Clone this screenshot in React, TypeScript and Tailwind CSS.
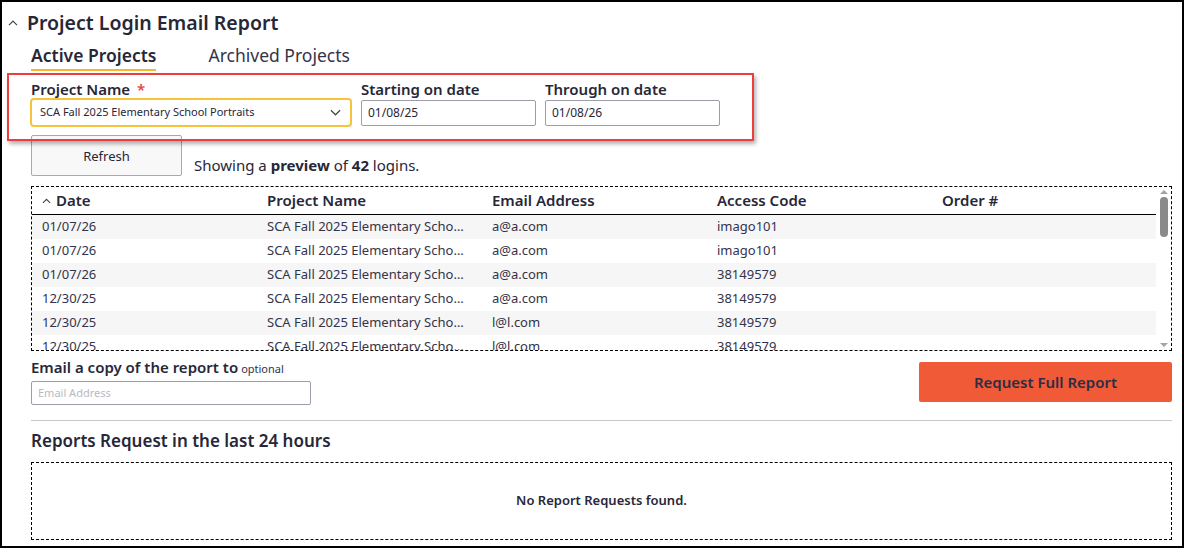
import React from 'react';

const rows = [
  { date: '01/07/26', email: 'a@a.com', code: 'imago101' },
  { date: '01/07/26', email: 'a@a.com', code: 'imago101' },
  { date: '01/07/26', email: 'a@a.com', code: '38149579' },
  { date: '12/30/25', email: 'a@a.com', code: '38149579' },
  { date: '12/30/25', email: 'l@l.com', code: '38149579' },
  { date: '12/30/25', email: 'l@l.com', code: '38149579' },
  { date: '12/29/25', email: 'l@l.com', code: '38149579' },
];

function ChevronUp({ className }: { className?: string }) {
  return (
    <svg viewBox="0 0 10 6" className={className} fill="none" stroke="currentColor" strokeWidth="1.2">
      <path d="M1 5.2 5 1.2l4 4" />
    </svg>
  );
}

function ChevronDown({ className }: { className?: string }) {
  return (
    <svg viewBox="0 0 12 7" className={className} fill="none" stroke="currentColor" strokeWidth="1.3">
      <path d="M1 1l5 5 5-5" />
    </svg>
  );
}

export default function App() {
  return (
    <div
      className="relative h-[548px] w-[1184px] overflow-hidden border-2 border-black bg-white text-[#272738]"
      style={{ fontFamily: '"Noto Sans", Lato, sans-serif' }}
    >
      {/* Header */}
      <div className="flex items-center pt-[9px] pl-[6px]">
        <ChevronUp className="h-[6px] w-[10px] text-[#444]" />
        <h1 className="ml-[9px] text-[19.5px] font-semibold leading-[24px]">Project Login Email Report</h1>
      </div>

      <div className="pl-[29px] pr-[10px]">
        {/* Tabs */}
        <div className="mt-[9px] flex gap-[52px] text-[17.5px] leading-[22px]">
          <div className="border-b-2 border-[#f6b632] pb-[3px] font-semibold">Active Projects</div>
          <div className="text-[#33334a]">Archived Projects</div>
        </div>

        {/* Filters */}
        <div className="mt-[9px] flex items-end gap-[9px]">
          <div className="flex flex-col">
            <label className="text-[15px] font-semibold leading-[18px]">
              Project Name <span className="ml-[3px] text-[#e5463c]">*</span>
            </label>
            <div className="-ml-[1px] flex h-[29px] w-[322px] items-center justify-between rounded-[4px] border-2 border-[#f7c33b] bg-white pl-[8px] pr-[9px]">
              <span className="text-[11px]">SCA Fall 2025 Elementary School Portraits</span>
              <ChevronDown className="h-[7px] w-[11px] text-[#444]" />
            </div>
          </div>
          <div className="flex flex-col">
            <label className="text-[15px] font-semibold leading-[18px]">Starting on date</label>
            <div className="mb-[1px] mt-[2px] flex h-[26px] w-[175px] items-center rounded-[2px] border border-[#9c9cab] px-[6px] text-[12px]">
              01/08/25
            </div>
          </div>
          <div className="flex flex-col">
            <label className="text-[15px] font-semibold leading-[18px]">Through on date</label>
            <div className="mb-[1px] mt-[2px] flex h-[26px] w-[175px] items-center rounded-[2px] border border-[#9c9cab] px-[6px] text-[12px]">
              01/08/26
            </div>
          </div>
        </div>

        {/* Refresh row */}
        <div className="mt-[8px] flex items-end">
          <button className="h-[41px] w-[151px] rounded-[2px] border border-[#a8a8b0] bg-[#f8f8f8] text-[13px] leading-[16px]">
            Refresh
          </button>
          <p className="mb-[1px] ml-[12px] text-[15px] leading-[20px]">
            Showing a <b>preview</b> of <b>42</b> logins.
          </p>
        </div>

        {/* Table */}
        <div className="mt-[10px] flex h-[165px] border border-dashed border-black">
          <div className="min-w-0 flex-1 overflow-hidden">
            <div className="flex h-[28px] items-center border-b border-black text-[15px] font-semibold">
              <div className="flex w-[235px] shrink-0 items-center pl-[10px]">
                <ChevronUp className="mr-[5px] h-[6px] w-[9px] text-[#444]" />
                Date
              </div>
              <div className="w-[225px] shrink-0">Project Name</div>
              <div className="w-[225px] shrink-0">Email Address</div>
              <div className="w-[225px] shrink-0">Access Code</div>
              <div className="w-[225px] shrink-0">Order #</div>
            </div>
            {rows.map((r, i) => (
              <div
                key={i}
                className={`flex h-[24px] items-center text-[13px] text-[#33334a] ${i % 2 === 0 ? 'bg-[#f6f6f6]' : 'bg-white'}`}
              >
                <div className="w-[235px] shrink-0 pl-[10px]">{r.date}</div>
                <div className="w-[225px] shrink-0 pr-[27px]">
                  <div className="truncate">SCA Fall 2025 Elementary School Portraits</div>
                </div>
                <div className="w-[225px] shrink-0">{r.email}</div>
                <div className="w-[225px] shrink-0">{r.code}</div>
                <div className="w-[225px] shrink-0" />
              </div>
            ))}
          </div>
          {/* Scrollbar */}
          <div className="flex w-[15px] shrink-0 flex-col items-center bg-white py-[3px]">
            <div className="h-0 w-0 border-x-[4px] border-b-[4px] border-x-transparent border-b-[#a3a3a3]" />
            <div className="mt-[3px] h-[40px] w-[8px] rounded-[4px] bg-[#8a8a8a]" />
            <div className="flex-1" />
            <div className="h-0 w-0 border-x-[4px] border-t-[4px] border-x-transparent border-t-[#a3a3a3]" />
          </div>
        </div>

        {/* Email + request */}
        <div className="mt-[6px] flex items-start justify-between">
          <div className="flex flex-col">
            <div className="flex items-baseline">
              <span className="text-[15px] font-semibold leading-[20px]">Email a copy of the report to</span>
              <span className="ml-[3px] text-[11px] text-[#33334a]">optional</span>
            </div>
            <input
              placeholder="Email Address"
              className="mt-[3px] h-[24px] w-[280px] rounded-[2px] border border-[#9c9cab] px-[6px] text-[11px] outline-none placeholder:text-[#b9b9c2]"
            />
          </div>
          <button className="mt-[5px] h-[40px] w-[253px] rounded-[2px] bg-[#f15a37] text-[15px] font-semibold text-[#2d2d45]">
            Request Full Report
          </button>
        </div>

        <div className="mt-[15px] h-px bg-[#c8c8c8]" />

        <h2 className="mt-[9px] text-[17px] font-semibold leading-[22px]">Reports Request in the last 24 hours</h2>

        <div className="mt-[10px] flex h-[78px] items-center justify-center border border-dashed border-black">
          <span className="text-[13px] font-semibold">No Report Requests found.</span>
        </div>
      </div>

      {/* Annotation highlight */}
      <div className="pointer-events-none absolute left-[5px] top-[71px] h-[68px] w-[747px] border-2 border-[#ee3d3d] shadow-[2px_3px_4px_rgba(0,0,0,0.3)]" />
    </div>
  );
}
